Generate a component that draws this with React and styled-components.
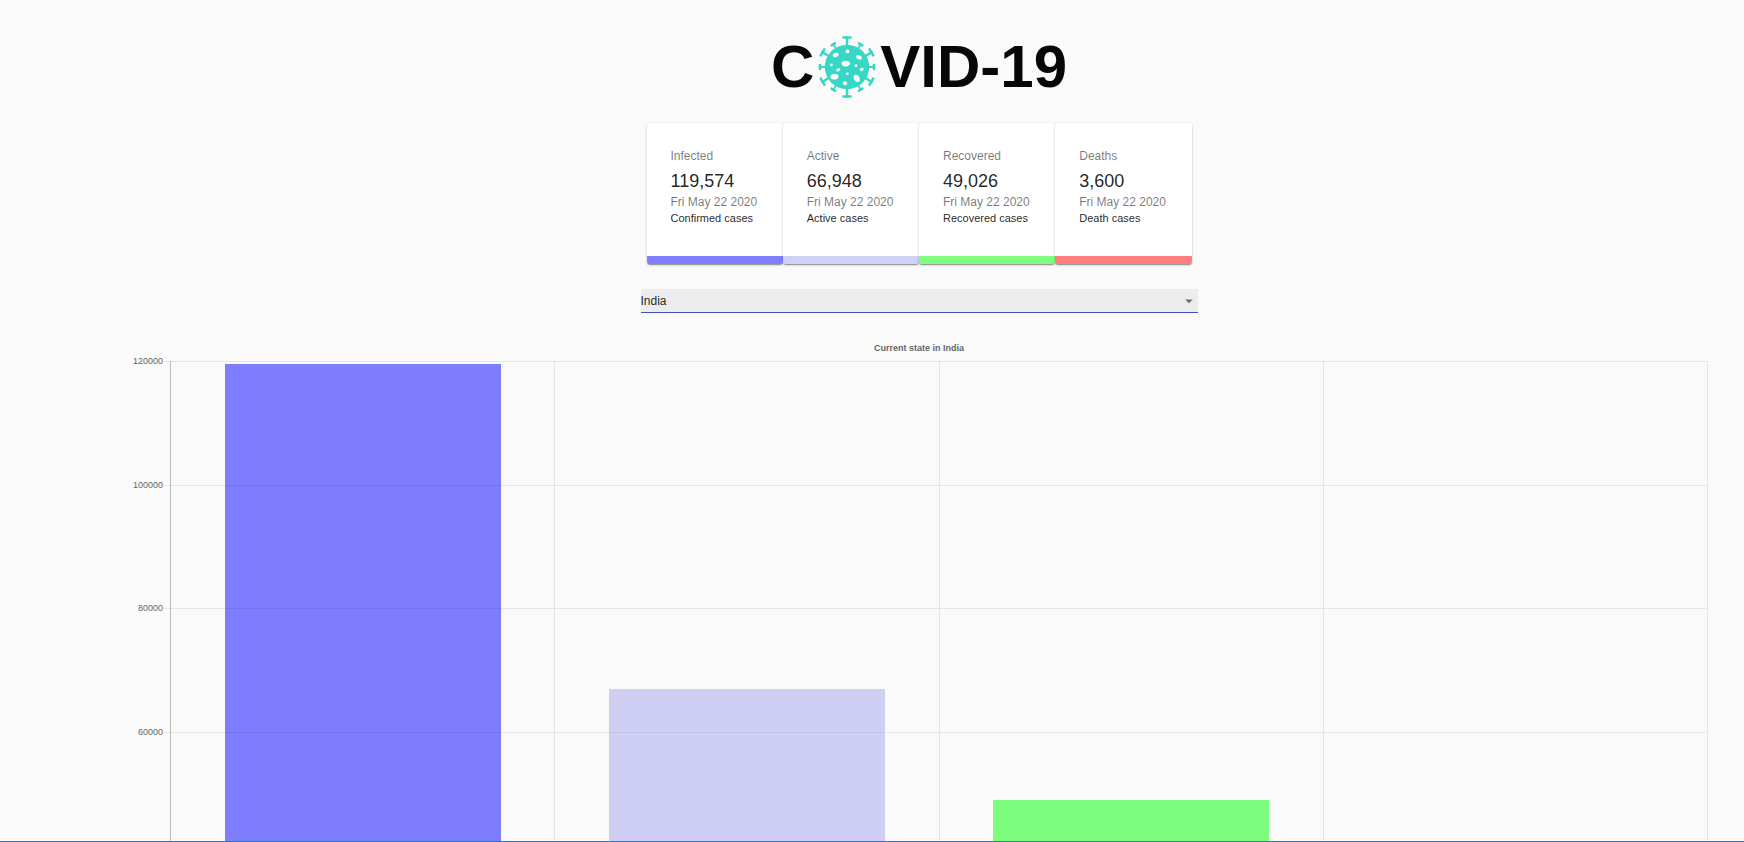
import React, { useState } from "react";
import styled, { createGlobalStyle } from "styled-components";

const GlobalStyle = createGlobalStyle`
  *, *::before, *::after { box-sizing: border-box; }
  html { scrollbar-width: none; }
  body {
    margin: 0;
    background: #fafafa;
    font-family: "Liberation Sans", Arial, sans-serif;
  }
`;

const Content = styled.main`
  display: flex;
  flex-direction: column;
  align-items: center;
  padding: 36px 36px 0 130px;
`;

// Thin line that stays on the lower edge of the window while the page scrolls.
const BottomLine = styled.div`
  position: fixed;
  inset: auto 0 0;
  height: 1px;
  background: #2a7cc0;
`;

const Logo = styled.h1`
  display: flex;
  align-items: center;
  gap: 4px;
  height: 62px;
  margin: 0 0 25px;
  color: #060807;
  font-size: 60px;
  font-weight: 700;
  line-height: 62px;
`;

const Cards = styled.section`
  display: flex;
  width: 100%;
  max-width: 545px;
`;

const Card = styled.article`
  flex: 1;
  padding: 24px 24px 31px;
  background: #fff;
  border-bottom: 8px solid ${(p) => p.$color};
  border-radius: 3px;
  box-shadow: 0 2px 1px -1px rgba(0, 0, 0, 0.2), 0 1px 1px rgba(0, 0, 0, 0.14),
    0 1px 3px rgba(0, 0, 0, 0.2);
  white-space: nowrap;
`;

const Caption = styled.p`
  margin: 0;
  color: rgba(0, 0, 0, 0.54);
  font-size: 12px;
  line-height: 18px;
`;

const Figure = styled.p`
  margin: 4px 0 0;
  color: rgba(0, 0, 0, 0.87);
  font-size: 18px;
  line-height: 24px;
`;

const Note = styled.p`
  margin: 0;
  color: rgba(0, 0, 0, 0.87);
  font-size: 11px;
  line-height: 14px;
`;

const Picker = styled.div`
  display: grid;
  align-items: center;
  width: 100%;
  max-width: 557px;
  margin-top: 25px;

  > * {
    grid-area: 1 / 1;
  }

  svg {
    justify-self: end;
    pointer-events: none;
    fill: rgba(0, 0, 0, 0.54);
  }
`;

const Select = styled.select`
  appearance: none;
  width: 100%;
  height: 24px;
  padding: 0 18px 0 0;
  border: 0;
  border-bottom: 1px solid #3f51b5;
  border-radius: 0;
  outline: 0;
  background: #ececec;
  color: rgba(0, 0, 0, 0.87);
  font: 12px "Liberation Sans", Arial, sans-serif;
`;

const Chart = styled.section`
  display: grid;
  grid-template-columns: 40px 1fr;
  width: 100%;
  margin-top: 28px;
  padding-bottom: 24px;
  color: #666;
  font-size: 9px;
`;

const ChartTitle = styled.h2`
  grid-column: 1 / -1;
  margin: 0 0 6px;
  font-size: 9px;
  line-height: 14px;
  text-align: center;
`;

const Axis = styled.div`
  display: flex;
  flex-direction: column;
  justify-content: space-between;
  margin: -6px 0;
`;

const AxisLabel = styled.span`
  display: flex;
  align-items: center;
  justify-content: flex-end;
  gap: 1px;
  line-height: 13px;

  &::after {
    content: "";
    width: 6px;
    height: 1px;
    background: rgba(0, 0, 0, 0.08);
  }
`;

const Plot = styled.div`
  display: grid;
  aspect-ratio: 1538 / 743;
  border-right: 1px solid rgba(0, 0, 0, 0.08);
  border-bottom: 1px solid rgba(0, 0, 0, 0.25);
`;

const GridRows = styled.div`
  grid-area: 1 / 1;
  display: flex;
  flex-direction: column;
`;

const GridRow = styled.div`
  flex: 1;
  border-top: 1px solid rgba(0, 0, 0, 0.08);
`;

const Columns = styled.div`
  grid-area: 1 / 1;
  display: grid;
  grid-template-columns: repeat(4, 1fr);
`;

const Column = styled.div`
  display: flex;
  align-items: flex-end;
  justify-content: center;
  border-left: 1px solid rgba(0, 0, 0, ${(p) => (p.$first ? 0.25 : 0.08)});
`;

const Bar = styled.div`
  width: 72%;
  background: ${(p) => p.$color};
`;

const Categories = styled.div`
  grid-column: 2;
  display: grid;
  grid-template-columns: repeat(4, 1fr);
  padding-top: 8px;
  text-align: center;
`;

const MAX = 120000;
const TICKS = [120000, 100000, 80000, 60000, 40000, 20000, 0];
const STATS = [
  { name: "Infected", value: 119574, note: "Confirmed cases", color: "rgba(0, 0, 255, 0.5)" },
  { name: "Active", value: 66948, note: "Active cases", color: "rgba(163, 163, 238, 0.5)" },
  { name: "Recovered", value: 49026, note: "Recovered cases", color: "rgba(0, 255, 0, 0.5)" },
  { name: "Deaths", value: 3600, note: "Death cases", color: "rgba(255, 0, 0, 0.5)" },
];

// Spikes: [rotation in degrees, outer radius, cap half-width]
const SPIKES = [
  [0, 30, 4.5], [180, 30, 4.5],
  [90, 27.5, 3], [270, 27.5, 3],
  [59, 29, 4.5], [121, 29, 4.5], [239, 29, 4.5], [301, 29, 4.5],
  [31, 27, 3], [149, 27, 3], [211, 27, 3], [329, 27, 3],
];

// Spots: [cx, cy, rx, ry, tilt]
const SPOTS = [
  [0.5, -15.6, 1.9, 1.9, 0], [-11.3, -12, 3, 2, -20], [12, -9.7, 3, 2, 25],
  [-1.2, -3.4, 4.2, 2.8, 0], [-15.6, -2, 1.4, 1.4, 0], [9, -1.3, 1.4, 1.4, 0],
  [-8.7, 2.8, 2.2, 1.5, -25], [14.6, 2.4, 2.1, 1.6, -20], [0.3, 6.8, 1.4, 1.4, 0],
  [-12.6, 9.8, 4, 2.7, -5], [9.8, 11.4, 2.7, 3.9, -30], [-2, 16.3, 2.1, 2, 0],
];

function Virus() {
  return (
    <svg width="58" height="62" viewBox="-29 -31 58 62" aria-hidden="true">
      <g fill="none" stroke="#38d6c4" strokeLinecap="round">
        {SPIKES.map(([angle, r, half]) => (
          <g key={angle} transform={`rotate(${angle})`}>
            <path d={`M0 -20V${-r}`} strokeWidth={half > 4 ? 2.4 : 1.8} />
            <path d={`M${-half + 1} ${-r + 0.5}H${half - 1}`} strokeWidth="2.6" />
          </g>
        ))}
      </g>
      <circle r="22.2" fill="#38d6c4" />
      {SPOTS.map(([x, y, rx, ry, tilt]) => (
        <ellipse
          key={`${x},${y}`}
          rx={rx}
          ry={ry}
          fill="#fafafa"
          transform={`translate(${x} ${y}) rotate(${tilt})`}
        />
      ))}
    </svg>
  );
}

export default function App() {
  const [country, setCountry] = useState("India");
  return (
    <>
      <GlobalStyle />
      <Content>
        <Logo aria-label="COVID-19">
          <span>C</span>
          <Virus />
          <span>VID-19</span>
        </Logo>
        <Cards>
          {STATS.map((s) => (
            <Card key={s.name} $color={s.color}>
              <Caption>{s.name}</Caption>
              <Figure>{s.value.toLocaleString("en-US")}</Figure>
              <Caption>Fri May 22 2020</Caption>
              <Note>{s.note}</Note>
            </Card>
          ))}
        </Cards>
        <Picker>
          <Select
            aria-label="Country"
            value={country}
            onChange={(e) => setCountry(e.target.value)}
          >
            <option>India</option>
          </Select>
          <svg width="18" height="18" viewBox="0 0 24 24" aria-hidden="true">
            <path d="M7 10l5 5 5-5z" />
          </svg>
        </Picker>
        <Chart>
          <ChartTitle>Current state in {country}</ChartTitle>
          <Axis>
            {TICKS.map((t) => (
              <AxisLabel key={t}>{t}</AxisLabel>
            ))}
          </Axis>
          <Plot>
            <GridRows>
              {TICKS.slice(0, -1).map((t) => (
                <GridRow key={t} />
              ))}
            </GridRows>
            <Columns>
              {STATS.map((s, i) => (
                <Column key={s.name} $first={i === 0}>
                  <Bar $color={s.color} style={{ height: `${(s.value / MAX) * 100}%` }} />
                </Column>
              ))}
            </Columns>
          </Plot>
          <Categories>
            {STATS.map((s) => (
              <span key={s.name}>{s.name}</span>
            ))}
          </Categories>
        </Chart>
      </Content>
      <BottomLine />
    </>
  );
}
